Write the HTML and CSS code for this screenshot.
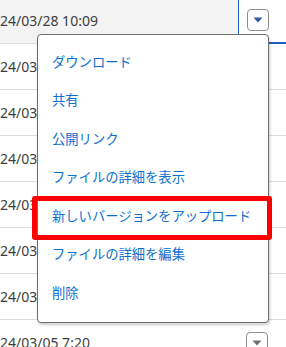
FILE: index.html
```html
<!DOCTYPE html>
<html lang="ja">
<head>
    <meta charset="UTF-8">
    <title>ファイル一覧</title>
    <link rel="stylesheet" href="styles.css">
</head>
<body>
    <div class="file-table">
        <div class="row row-hover">
            <div class="cell-date">2024/03/28 10:09</div>
            <div class="cell-action focused">
                <button class="menu-btn" aria-label="メニュー">
                    <svg width="10" height="6" viewBox="0 0 10 6"><path d="M0.5 0.5h9L5 5.5z" fill="#2f5c9e"/></svg>
                </button>
            </div>
        </div>
        <div class="row"><div class="cell-date">2024/03/27 18:42</div><div class="cell-action"></div></div>
        <div class="row"><div class="cell-date">2024/03/25 9:15</div><div class="cell-action"></div></div>
        <div class="row"><div class="cell-date">2024/03/22 14:03</div><div class="cell-action"></div></div>
        <div class="row"><div class="cell-date">2024/03/19 11:30</div><div class="cell-action"></div></div>
        <div class="row"><div class="cell-date">2024/03/14 16:58</div><div class="cell-action"></div></div>
        <div class="row"><div class="cell-date">2024/03/08 10:21</div><div class="cell-action"></div></div>
        <div class="row">
            <div class="cell-date">2024/03/05 7:20</div>
            <div class="cell-action">
                <button class="menu-btn" aria-label="メニュー">
                    <svg width="10" height="6" viewBox="0 0 10 6"><path d="M0.5 0.5h9L5 5.5z" fill="#706e6b"/></svg>
                </button>
            </div>
        </div>
    </div>

    <!-- dropdown opened from the first row -->
    <ul class="menu">
        <li class="menu-item">ダウンロード</li>
        <li class="menu-item">共有</li>
        <li class="menu-item">公開リンク</li>
        <li class="menu-item">ファイルの詳細を表示</li>
        <li class="menu-item marked">新しいバージョンをアップロード<span class="mark"></span></li>
        <li class="menu-item">ファイルの詳細を編集</li>
        <li class="menu-item">削除</li>
    </ul>
</body>
</html>
```

FILE: styles.css
```css
:root {
    --link-color: #0d70d0;
    --text-color: #3e3e3c;
    --line-color: #dcdcdc;
    --focus-color: #1b5fbf;
}

body {
    margin: 0;
    overflow: hidden;
    background: #ffffff;
    font-family: "Noto Sans", "Noto Sans CJK JP", sans-serif;
}

.file-table {
    margin-top: -2px;
}

.row {
    display: flex;
    height: 46px;
}

.cell-date {
    flex: 1;
    margin-left: -16px;
    display: flex;
    align-items: center;
    font-size: 14px;
    color: var(--text-color);
    border-bottom: 1px solid var(--line-color);
    white-space: nowrap;
}

.row-hover .cell-date {
    background: #f3f3f3;
}

.cell-action {
    flex: none;
    width: 40px;
    padding-left: 8px;
    display: flex;
    align-items: center;
    border-bottom: 1px solid var(--line-color);
}

.cell-action.focused {
    width: 39px;
    border-left: 1px solid var(--focus-color);
    border-bottom: 2px solid var(--focus-color);
}

.menu-btn {
    width: 22px;
    height: 22px;
    padding: 0;
    display: flex;
    align-items: center;
    justify-content: center;
    background: #ffffff;
    border: 1px solid #8f8f8f;
    border-radius: 4px;
}

.menu {
    position: absolute;
    left: 37px;
    top: 34px;
    width: 230px;
    margin: 0;
    padding: 7px 0 10px;
    list-style: none;
    background: #ffffff;
    border: 1px solid #6f6f6f;
    border-radius: 4px;
    box-shadow: 1px 2px 3px rgba(0, 0, 0, 0.2);
}

.menu-item {
    position: relative;
    height: 38.5px;
    padding-left: 14px;
    display: flex;
    align-items: center;
    font-family: "Noto Sans CJK JP", sans-serif;
    font-size: 13.3px;
    color: var(--link-color);
}

.mark {
    position: absolute;
    left: -6px;
    right: -4px;
    top: 0;
    bottom: -5px;
    border: 5.5px solid #ff0000;
    border-radius: 3px;
}
```
